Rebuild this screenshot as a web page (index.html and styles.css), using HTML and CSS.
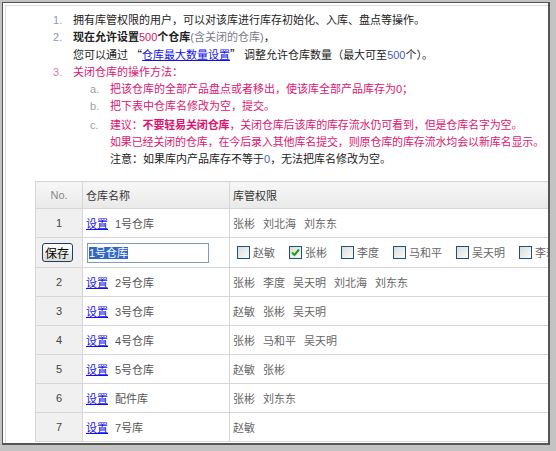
FILE: index.html
```html
<!DOCTYPE html>
<html lang="zh-CN">

<head>
    <meta charset="UTF-8">
    <title>仓库设置</title>
    <link rel="stylesheet" href="styles.css">
</head>

<body>
    <div class="window">
        <ol class="notes">
            <li>拥有库管权限的用户，可以对该库进行库存初始化、入库、盘点等操作。</li>
            <li><b>现在允许设置</b><span class="hot">500</span><b>个仓库</b><span class="muted">(含关闭的仓库)</span>，<br>
                您可以通过 <span class="cjk">“</span><a href="#">仓库最大数量设置</a><span class="cjk">”</span> 调整允许仓库数量<span class="cjk">（</span>最大可至<span class="num">500</span>个<span class="cjk">）</span>。</li>
            <li class="warn">关闭仓库的操作方法：
                <ol class="steps">
                    <li>把该仓库的全部产品盘点或者移出，使该库全部产品库存为0；</li>
                    <li>把下表中仓库名修改为空，提交。</li>
                    <li class="step-c">建议：<b>不要轻易关闭仓库</b>，关闭仓库后该库的库存流水仍可看到，但是仓库名字为空。<br>
                        如果已经关闭的仓库，在今后录入其他库名提交，则原仓库的库存流水均会以新库名显示。
                        <div class="tip">注意：如果库内产品库存不等于<span class="num">0</span>，无法把库名修改为空。</div>
                    </li>
                </ol>
            </li>
        </ol>

        <table class="stores">
            <colgroup>
                <col class="c-no">
                <col class="c-name">
                <col>
            </colgroup>
            <thead>
                <tr>
                    <th class="no">No.</th>
                    <th>仓库名称</th>
                    <th>库管权限</th>
                </tr>
            </thead>
            <tbody>
                <tr>
                    <td class="no">1</td>
                    <td><a href="#">设置</a><span class="name">1号仓库</span></td>
                    <td><span class="who">张彬</span><span class="who">刘北海</span><span class="who">刘东东</span></td>
                </tr>
                <tr class="editing">
                    <td class="no"><button type="button">保存</button></td>
                    <td><div class="field"><span class="sel">1号仓库</span></div></td>
                    <td class="checks"><label><span class="cb"></span>赵敏</label><label><span class="cb on"><svg viewBox="0 0 13 13" width="13" height="13"><path d="M3 6.5 L5.5 9 L10 3.5" fill="none" stroke="#22a022" stroke-width="2"/></svg></span>张彬</label><label><span class="cb"></span>李度</label><label><span class="cb"></span>马和平</label><label><span class="cb"></span>吴天明</label><label><span class="cb"></span>李莉</label></td>
                </tr>
                <tr>
                    <td class="no">2</td>
                    <td><a href="#">设置</a><span class="name">2号仓库</span></td>
                    <td><span class="who">张彬</span><span class="who">李度</span><span class="who">吴天明</span><span class="who">刘北海</span><span class="who">刘东东</span></td>
                </tr>
                <tr>
                    <td class="no">3</td>
                    <td><a href="#">设置</a><span class="name">3号仓库</span></td>
                    <td><span class="who">赵敏</span><span class="who">张彬</span><span class="who">吴天明</span></td>
                </tr>
                <tr>
                    <td class="no">4</td>
                    <td><a href="#">设置</a><span class="name">4号仓库</span></td>
                    <td><span class="who">张彬</span><span class="who">马和平</span><span class="who">吴天明</span></td>
                </tr>
                <tr>
                    <td class="no">5</td>
                    <td><a href="#">设置</a><span class="name">5号仓库</span></td>
                    <td><span class="who">赵敏</span><span class="who">张彬</span></td>
                </tr>
                <tr>
                    <td class="no">6</td>
                    <td><a href="#">设置</a><span class="name">配件库</span></td>
                    <td><span class="who">张彬</span><span class="who">刘东东</span></td>
                </tr>
                <tr>
                    <td class="no">7</td>
                    <td><a href="#">设置</a><span class="name">7号库</span></td>
                    <td><span class="who">赵敏</span></td>
                </tr>
            </tbody>
        </table>
    </div>
</body>

</html>
```

FILE: styles.css
```css
body {
    margin: 0;
    padding: 2px 0 0 2px;
    background-color: #c3c3c3;
    font-family: 'Liberation Sans', 'Noto Sans CJK SC', sans-serif;
    font-size: 11px;
    color: #222;
}

.window {
    width: 545px;
    height: 440px;
    background: white;
    border-left: 1px solid #555;
    border-top: 1px solid #555;
    border-right: 2px solid #555;
    border-bottom: 2px solid #555;
    box-shadow: inset 2px 2px 0 #fff, inset 3px 3px 0 #dcdcdc;
    overflow: hidden;
}

a {
    color: #1010ee;
    text-decoration: underline;
}

.cjk {
    font-family: 'Noto Sans CJK SC', sans-serif;
}

/* top notes */
.notes {
    list-style: none;
    margin: 0;
    padding: 9px 0 0 70px;
    line-height: 17px;
    counter-reset: num;
}

.notes > li {
    counter-increment: num;
}

.notes > li::before {
    content: counter(num) ".";
    display: inline-block;
    width: 20px;
    margin-left: -20px;
    color: #8a9ab3;
}

.notes > li.warn::before {
    color: #e27aa6;
}

.warn {
    color: #dc1670;
}

.hot {
    color: #e0105a;
}

.muted {
    color: #7a7a8a;
}

.num {
    color: #4b5cb0;
}

.steps {
    list-style: none;
    margin: 0;
    padding-left: 37px;
    counter-reset: step;
}

.steps li {
    counter-increment: step;
}

.steps li::before {
    content: counter(step, lower-alpha) ".";
    display: inline-block;
    width: 20px;
    margin-left: -20px;
    color: #a0a0a8;
}

.steps .step-c {
    margin-top: 2px;
    letter-spacing: -0.15px;
    white-space: nowrap;
}

.tip {
    color: #222;
    letter-spacing: 0;
}

/* table */
.stores {
    margin: 13px 0 0 32px;
    width: 620px;
    border-collapse: collapse;
    table-layout: fixed;
}

.c-no {
    width: 47px;
}

.c-name {
    width: 147px;
}

.stores th,
.stores td {
    border: 1px solid #d6d6d6;
    padding: 0 3px;
    height: 28px;
    text-align: left;
    font-weight: normal;
    white-space: nowrap;
    color: #666;
}

.stores th {
    height: 26px;
    color: #333;
    background: linear-gradient(#f7f7f7, #e9e9e9);
}

.stores .no {
    text-align: center;
    background-color: #f0f0f0;
    color: #444;
}

.stores th.no {
    color: #888;
    background: linear-gradient(#f7f7f7, #e9e9e9);
}

.name {
    margin-left: 7px;
    color: #555;
}

.who {
    margin-right: 8px;
}

.stores tr.editing td {
    height: 29px;
}

button {
    font-family: inherit;
    font-size: 12px;
    width: 31px;
    height: 19px;
    padding: 0;
    margin-left: -4px;
    border: 1px solid #1f3b6e;
    border-radius: 3px;
    background: linear-gradient(#ffffff, #dcdcd4);
    color: #000;
}

.field {
    width: 119px;
    height: 18px;
    margin-left: 1px;
    border: 1px solid #7f9db9;
    line-height: 18px;
    padding-left: 1px;
}

.sel {
    background-color: #3168c6;
    color: white;
}

.checks label {
    display: inline-flex;
    align-items: center;
    margin-right: 14px;
}

.checks label:first-child {
    margin-left: 4px;
}

.cb {
    display: inline-block;
    width: 11px;
    height: 11px;
    margin-right: 3px;
    border: 1px solid #1c5180;
    background: linear-gradient(135deg, #dcdcd7, #fbfbf9);
}

.cb svg {
    display: block;
    margin: -1px;
}
```
